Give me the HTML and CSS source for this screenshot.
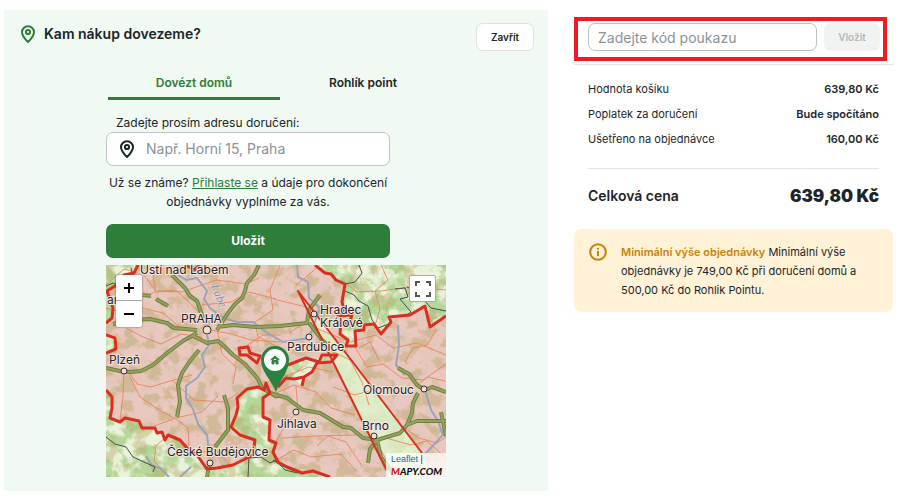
FILE: index.html
```html
<!DOCTYPE html>
<html lang="cs">
<head>
<meta charset="utf-8">
<meta name="viewport" content="width=device-width, initial-scale=1">
<title>Doručení</title>
<link rel="stylesheet" href="styles.css">
</head>
<body>
<main class="checkout">
  <section class="delivery">
    <header class="delivery-head">
      <svg class="pin" viewBox="0 0 16 18" aria-hidden="true"><path d="M8 17C5 14 2 10.600 2 7.200a6 6 0 0 1 12 0C14 10.600 11 14 8 17Z"/><circle cx="8" cy="7" r="2.100"/></svg>
      <h1>Kam nákup dovezeme?</h1>
      <button class="close" type="button">Zavřít</button>
    </header>
    <div class="delivery-body">
      <nav class="tabs" role="tablist">
        <button class="tab active" type="button" role="tab" aria-selected="true">Dovézt domů</button>
        <button class="tab" type="button" role="tab" aria-selected="false">Rohlík point</button>
      </nav>
      <form class="address">
        <label for="address">Zadejte prosím adresu doručení:</label>
        <div class="address-field">
          <svg class="pin" viewBox="0 0 16 18" aria-hidden="true"><path d="M8 17C5 14 2 10.600 2 7.200a6 6 0 0 1 12 0C14 10.600 11 14 8 17Z"/><circle cx="8" cy="7" r="2.100"/></svg>
          <input id="address" type="text" placeholder="Např. Horní 15, Praha">
        </div>
        <p>Už se známe? <a href="#">Přihlaste se</a> a údaje pro dokončení objednávky vyplníme za vás.</p>
        <button class="save" type="button">Uložit</button>
      </form>
      <div class="map">
        <svg class="map-canvas" viewBox="0 0 340 212" role="img" aria-label="Mapa">
          <defs>
            <filter id="relief" x="0" y="0" width="100%" height="100%" color-interpolation-filters="sRGB">
              <feTurbulence type="fractalNoise" baseFrequency="0.07" numOctaves="6" seed="11"/>
              <feColorMatrix values="0 0 0 0 .7  0 0 0 0 .64  0 0 0 0 .38  7 0 0 0 -3.400"/>
            </filter>
            <filter id="forest" x="0" y="0" width="100%" height="100%" color-interpolation-filters="sRGB">
              <feTurbulence type="fractalNoise" baseFrequency="0.06" numOctaves="5" seed="3"/>
              <feColorMatrix values="0 0 0 0 .62  0 0 0 0 .8  0 0 0 0 .5  6 0 0 0 -2.500"/>
            </filter>
          </defs>
          <rect class="land" width="340" height="212"/>
          <rect width="340" height="212" filter="url(#forest)" opacity=".7"/>
          <path class="zone" d="M32 0 28 8 18 10 9 21 1 26 7 43 6 53 0 58V70L9 73 10 84 0 88V125L6 132V143L4 153 14 157 19 153 33 156 36 163H49L51 168H56L59 175 62 170 74 175 81 183 91 190 101 204 111 203 127 200 147 190 149 175 134 170 125 162 130 150 132 142 131 133 141 124 152 122 158 125 164 128 157 133V152L164 155 163 175 170 178 167 187 172 197 181 202 196 208 207 206 224 212H281V206L229 100 192 26 249 100 316 188 325 212H340V51L324 62 319 41 304 50 285 54 275 69 268 59 258 60 249 66 250 81 240 81 234 69 235 57 232 51 238 44 239 19 232 14 219 8 209 0ZM182 100 200 93 210 96 215 90 231 90 211 98 206 107 198 112 196 121 188 114 180 113 170 124Z"/>
          <rect width="340" height="212" filter="url(#relief)" opacity=".4"/>
          <path class="wedge" d="M192 26 229 100 281 206V212H325L316 188 249 100Z"/>
          <g class="minor">
            <path d="M29 0 42 15 50 27 70 25 89 43 104 58M47 10 50 27M27 35 52 26 76 27 110 15 140 19 153 13M96 40 125 37 143 27 170 34M174 0 164 25 167 45 149 57 152 72 174 83M105 65 125 69 145 75 174 77M96 72 75 69 55 79 35 71 20 63M24 109 31 119 45 122 64 116 86 110M18 106 17 132 14 155M24 112 34 132 55 146 70 154 82 163 83 181M48 161 70 153 96 147 112 131M67 116 88 135 118 137 131 129M62 170 50 181 48 196 63 212M91 190 108 183 123 199M111 64 116 89 130 102 127 119"/>
            <path d="M167 34 188 39 205 43M214 0 200 12 190 20M183 68 199 58 217 66 244 77 270 70 287 83 311 78 340 90M240 18 250 27 275 26 302 22 340 25M275 0 282 15 269 26 274 44 268 64M203 81 230 88 244 95 256 117 263 140M166 130 188 120 210 127 225 143 249 150M177 173 209 171 250 170M211 181 222 171 240 177 256 201M190 121 192 146 180 159 170 177M227 122 249 130 266 125M249 82 261 102 277 99 296 113 317 115 340 99M311 120 322 112 339 116M280 173 305 180 321 176 340 193M271 178 280 194 302 195 321 207M300 164 313 173 331 178 340 172M167 197 188 185 205 192 235 189 250 206"/>
            <path d="M0 20 18 4 32 8M0 43 20 49 36 43 57 48 76 64M175 70 157 70 137 83 128 101M165 99 180 111 203 102 227 107M320 45 330 65 321 80 307 83 299 97M253 83 264 77 273 95M164 110 181 115 197 101"/>
          </g>
          <g class="river">
            <path d="M72 10 80 15 91 13 101 26 98 34 104 43 117 53 131 57 147 57 160 67 177 77 203 73 214 43 203 33 202 17 192 12 191 0"/>
            <path d="M101 70 103 80 96 90 99 102 91 113 80 121 80 133 87 144 92 159 101 170 103 187M292 60 293 80 290 100 299 110M319 125 325 145 332 156 337 170 319 189M40 191 45 200 54 203 63 212M74 212 85 202"/>
          </g>
          <g class="state-border">
            <path d="M0 21 7 18 13 22 21 14 27 12 25 3M239 19 249 17 256 8 253 0M239 26 248 30 253 36 262 41 266 55 272 63 283 59M289 24 299 23 302 32 294 34 305 47 299 51M301 22 311 27 325 43 340 46M0 172 9 179 20 182 27 192 38 197 49 202 47 207M143 190 142 212M144 193 155 192 164 198 170 195 179 205 192 208M167 195 176 201 191 205"/>
          </g>
          <g class="highway">
            <path id="roads" d="M7 59 26 55 44 54 61 58 68 63 91 65M66 10 79 23 84 31 91 36 97 53M153 0 148 10 141 18 139 26 136 33 129 39 122 48 111 65M111 62 127 60 150 62 174 61 201 58 203 45 214 30M37 30 45 31M50 34 62 41M91 68 77 76 61 88 47 100 35 106 24 107 14 106 0 103M93 85 84 96 76 108 72 120 74 137 71 152M87 71 101 78 112 76 119 82 127 90 139 99 147 108 152 114 156 123 171 132M164 128 181 133 197 145 214 148 237 162 245 163 257 173 271 175 294 168 301 160 311 156 323 156 340 156M292 103 303 109 311 120 319 125 326 122 340 127M312 128 307 138 306 148 301 160M271 175 275 192 286 207M271 175 264 184 262 198M118 130 122 143 122 165 109 182M103 201 101 212M203 58 216 75 222 80M335 147 340 171"/>
            <use class="road-core" href="#roads"/>
          </g>
          <g class="limit">
            <path d="M32 0 28 8 18 10 9 21 1 26 7 43 6 53 0 58M0 70 9 73 10 84 0 88M0 125 6 132V143L4 153 14 157 19 153 33 156 36 163H49L51 168 56 167 59 175 62 170 74 175 81 183 91 190 101 204 111 203 127 200 147 190 149 175 134 170 125 162 130 150 132 142 131 133 141 124 152 122 158 125 160 118 164 128 157 133V152L164 155 163 175 170 178 167 187 172 197 181 202 196 208 207 206 224 212"/>
            <path d="M209 0 219 8 225 9 230 15 239 19 236 37 238 44 232 51 246 50 243 59 235 57 234 69 242 75 240 81 250 81 249 66 258 65 258 60 268 59 275 69 285 57 283 52 304 50 319 41 324 62 340 51M80 0 88 5 94 0M133 83 142 82 144 88 154 91 151 98 141 90 134 90ZM182 100 200 93 213 97 216 90 231 90 225 97 211 98 206 107 198 112 196 121 M198 112 188 114 180 113 172 122"/>
            <path d="M281 206 192 26 249 100 316 188"/>
          </g>
          <g class="city"><circle cx="101" cy="65" r="4"/><circle cx="18" cy="106" r="3"/><circle cx="203" cy="72" r="3"/><circle cx="208" cy="49" r="3"/><circle cx="190" cy="147" r="3"/><circle cx="268" cy="171" r="3"/><circle cx="318" cy="124" r="3"/><circle cx="104" cy="198" r="3"/></g>
          <g class="place">
            <text x="34" y="9">Ústí nad Labem</text><text x="75" y="58">PRAHA</text><text x="3" y="99">Plzeň</text><text x="1" y="39">ar</text>
            <text x="214" y="49">Hradec</text><text x="214" y="62">Králové</text><text x="181" y="86">Pardubice</text><text x="257" y="129">Olomouc</text><text x="171" y="163">Jihlava</text><text x="256" y="165">Brno</text><text x="61" y="191">České Budějovice</text>
          </g>
          <text class="water-name" x="0" y="0" transform="translate(105 21) rotate(68)">Labe</text>
          <g class="marker"><path d="M170 127C164 113 155 106 155 95a14 14 0 0 1 28 0C183 106 175 113 170 127Z"/><circle cx="169" cy="95" r="11"/><path d="M164.500 95 169 91 173.500 95M166 95.500V99H168V96.500H170V99H172V95.500L169 93Z"/></g>
        </svg>
        <div class="zoom-controls"><button type="button" aria-label="Přiblížit"><svg viewBox="0 0 12 12"><path d="M6 1V11M1 6H11"/></svg></button><button type="button" aria-label="Oddálit"><svg viewBox="0 0 12 12"><path d="M1 6H11"/></svg></button></div>
        <button class="fullscreen" type="button" aria-label="Celá obrazovka"><svg viewBox="0 0 16 16"><path d="M1 5V1H5M11 1H15V5M15 11V15H11M5 15H1V11"/></svg></button>
        <div class="attribution"><span><a href="#">Leaflet</a> |</span><strong><b>M</b>APY.COM</strong></div>
      </div>
    </div>
  </section>

  <aside class="summary">
    <form class="voucher">
      <input type="text" aria-label="Kód poukazu" placeholder="Zadejte kód poukazu">
      <button type="button" disabled>Vložit</button>
    </form>
    <dl class="costs">
      <div><dt>Hodnota košíku</dt><dd>639,80 Kč</dd></div>
      <div><dt>Poplatek za doručení</dt><dd>Bude spočítáno</dd></div>
      <div><dt>Ušetřeno na objednávce</dt><dd>160,00 Kč</dd></div>
    </dl>
    <div class="total"><span>Celková cena</span><strong>639,80 Kč</strong></div>
    <div class="notice">
      <svg viewBox="0 0 18 18" aria-hidden="true"><circle cx="9" cy="9" r="7.800"/><path d="M9 8V13M9 5V6.500"/></svg>
      <p><strong>Minimální výše objednávky</strong> Minimální výše objednávky je 749,00 Kč při doručení domů a 500,00 Kč do Rohlik Pointu.</p>
    </div>
  </aside>
</main>
</body>
</html>
```

FILE: styles.css
```css
* { box-sizing: border-box; }
body { margin: 0; background: #fff; color: #1c2529; font: 12px/18px Inter, "Liberation Sans", sans-serif; }
button, input { font: inherit; color: inherit; margin: 0; }
h1, p, dl, dd { margin: 0; }
svg { display: block; fill: none; }

.checkout { display: grid; grid-template-columns: minmax(0, 544fr) minmax(0, 319fr); gap: 26px; align-items: start; padding: 10px 7px 7px 4px; }

.delivery { background: #f0f9f2; padding: 13px 14px 14px; }
.delivery-head { display: flex; align-items: center; gap: 8px; padding-left: 2px; }
.delivery-head h1 { flex: 1; font-size: 14px; line-height: 20px; font-weight: 600; padding-bottom: 6px; }
.pin { width: 16px; height: 18px; stroke: currentColor; stroke-width: 2; }
.delivery-head .pin { color: #2e7d3b; margin-bottom: 6px; }
.close { width: 58px; height: 28px; padding: 0; background: #fff; border: 1px solid #dde3e1; border-radius: 7px; font-size: 10px; font-weight: 600; }
.delivery-body { padding: 0 88px; }

.tabs { display: grid; grid-template-columns: 86fr 83fr; margin: 15px 0 14px 2px; }
.tab { height: 34px; padding: 2px 0 0; background: none; border: 0; border-bottom: 3px solid transparent; font-weight: 600; }
.tab.active { color: #2e7d3b; border-color: #2e7d3b; }

.address { display: flex; flex-direction: column; margin-right: 56px; }
.address label { padding-left: 10px; }
.address-field { display: flex; align-items: center; gap: 11px; height: 34px; padding: 0 12px; background: #fff; border: 1px solid #bcc6c8; border-radius: 7px; }
.address-field input { flex: 1; min-width: 0; padding: 0; border: 0; outline: 0; background: none; font-size: 14px; }
input::placeholder { color: #8a9296; opacity: 1; }
.address p { padding: 7px 0 13px; line-height: 19px; text-align: center; }
.address a { color: #2e7d3b; }
.save { height: 34px; background: #2e7d3b; border: 0; border-radius: 7px; color: #fff; font-weight: 700; }

.map { position: relative; margin-top: 7px; }
.map-canvas { width: 100%; height: auto; }
.land { fill: #eaf2da; }
.zone { fill: #e8c5bd; fill-opacity: .93; }
.wedge { fill: #dfedca; fill-opacity: .85; }
.minor { stroke: #ec8058; stroke-width: 1; stroke-linejoin: round; opacity: .85; }
.river { stroke: #9aa3bb; stroke-width: 2; stroke-linejoin: round; }
.state-border { stroke: #4c4d49; stroke-width: 1; stroke-linejoin: round; }
.highway { stroke: #71803d; stroke-width: 4; stroke-linejoin: round; }
.road-core { stroke: #93a260; stroke-width: 2; }
.limit { stroke: #d92f20; stroke-width: 3; stroke-linejoin: round; }
.limit path:last-child { stroke-width: 2; }
.city { fill: #f3ddd6; stroke: #333; stroke-width: 1; }
.place { fill: #222; stroke: #f5e6df; stroke-width: 2; paint-order: stroke; font-size: 12px; }
.water-name { fill: #7a86b0; stroke: #f0ded8; stroke-width: 1; paint-order: stroke; font: italic 12px "Liberation Serif", serif; }
.marker { fill: #2a8140; }
.marker circle { fill: #fff; }
.marker path:last-child { stroke: #2a8140; stroke-width: 1; }

.zoom-controls { position: absolute; left: 10px; top: 10px; width: 26px; border-radius: 2px; background: #fff; box-shadow: 0 0 2px #555; }
.zoom-controls button { display: grid; place-items: center; width: 26px; height: 26px; padding: 0; border: 0; background: none; }
.zoom-controls button:first-child { border-bottom: 1px solid #aaa; }
.zoom-controls svg { width: 12px; height: 12px; stroke: #000; stroke-width: 2; }
.fullscreen { position: absolute; right: 10px; top: 10px; display: grid; place-items: center; width: 27px; height: 27px; padding: 0; border: 1px solid #aaa; border-radius: 2px; background: #fff; }
.fullscreen svg { width: 16px; height: 16px; stroke: #555; stroke-width: 2; }
.attribution { position: absolute; right: 0; bottom: 0; display: flex; flex-direction: column; width: 60px; padding: 0 5px; background: rgba(255, 255, 255, .75); font: 9px/12px "Liberation Sans", sans-serif; }
.attribution a { color: #0078a8; text-decoration: none; }
.attribution strong { color: #111; font: italic 900 10px/12px Lato, sans-serif; white-space: nowrap; }
.attribution b { color: #e01020; }

.summary { padding-top: 7px; }
.voucher { display: flex; gap: 7px; align-items: center; height: 44px; margin-right: 6px; padding: 0 3px 4px 10px; border: 4px solid #ed1c24; }
.voucher input { flex: 1; min-width: 0; height: 28px; padding: 0 9px; background: #fff; border: 1px solid #b9c4c3; border-radius: 7px; font-size: 14px; }
.voucher button { width: 56px; height: 28px; padding: 0; border: 0; border-radius: 7px; background: #f0f3f2; color: #b3b9ba; font-size: 10px; font-weight: 600; }
.costs { display: grid; gap: 7px; margin-top: 3px; padding: 15px 14px 20px; border-top: 1px solid #e1e7e6; }
.costs div { display: flex; justify-content: space-between; font-size: 11px; }
.costs dd { font-weight: 600; }
.total { display: flex; align-items: center; justify-content: space-between; margin: 0 14px; padding: 15px 0 21px; border-top: 1px solid #e1e7e6; font-size: 14px; line-height: 24px; font-weight: 600; }
.total strong { font-size: 17px; font-weight: 900; }
.notice { display: flex; gap: 14px; padding: 14px 15px 12px; background: #fff2d6; border-radius: 7px; font-size: 11px; line-height: 19px; }
.notice svg { flex: none; width: 18px; height: 18px; stroke: #c98309; stroke-width: 2; }
.notice strong { color: #c98309; font-weight: 600; }
```
